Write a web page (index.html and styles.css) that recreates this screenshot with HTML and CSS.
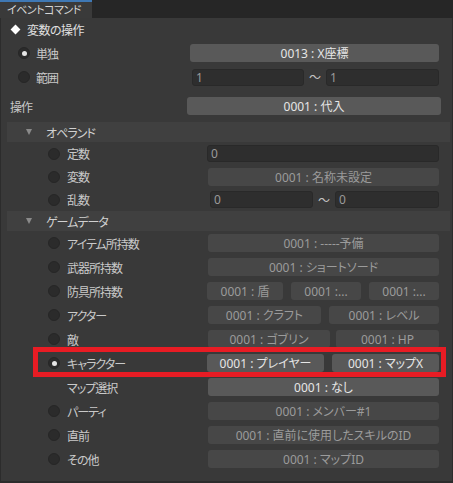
FILE: index.html
```html
<!DOCTYPE html>
<html lang="ja">
<head>
<meta charset="utf-8">
<title>イベントコマンド</title>
<link rel="stylesheet" href="styles.css">
</head>
<body>
<div class="tabbar"><div class="tab">イベントコマンド</div></div>
<div class="panel">
  <div class="title"><span class="diamond"></span><span>変数の操作</span></div>

  <div class="row top">
    <span class="radio on"></span><span class="label">単独</span>
    <div class="ctrl w-single"><div class="btn grow">0013 : X座標</div></div>
  </div>
  <div class="row top">
    <span class="radio"></span><span class="label">範囲</span>
    <div class="ctrl w-range">
      <div class="input w112">1</div><span class="tilde">〜</span><div class="input w113">1</div>
    </div>
  </div>
  <div class="spacer5"></div>
  <div class="row op">
    <span class="label">操作</span>
    <div class="ctrl w-op"><div class="btn grow">0001 : 代入</div></div>
  </div>

  <div class="band"><span class="tri"></span><span>オペランド</span></div>
  <div class="row sub h23">
    <span class="radio"></span><span class="label">定数</span>
    <div class="ctrl w232"><div class="input grow">0</div></div>
  </div>
  <div class="row sub h23">
    <span class="radio"></span><span class="label">変数</span>
    <div class="ctrl w231"><div class="btn dis grow">0001 : 名称未設定</div></div>
  </div>
  <div class="row sub h23">
    <span class="radio"></span><span class="label">乱数</span>
    <div class="ctrl w229">
      <div class="input w103">0</div><span class="tilde">〜</span><div class="input w104">0</div>
    </div>
  </div>

  <div class="band"><span class="tri"></span><span>ゲームデータ</span></div>
  <div class="row sub">
    <span class="radio"></span><span class="label">アイテム所持数</span>
    <div class="ctrl w231"><div class="btn dis grow">0001 : -----予備</div></div>
  </div>
  <div class="row sub">
    <span class="radio"></span><span class="label">武器所持数</span>
    <div class="ctrl w231"><div class="btn dis grow">0001 : ショートソード</div></div>
  </div>
  <div class="row sub">
    <span class="radio"></span><span class="label">防具所持数</span>
    <div class="ctrl w232 gap8">
      <div class="btn dis w76">0001 : 盾</div><div class="btn dis w70">0001 :...</div><div class="btn dis w70">0001 :...</div>
    </div>
  </div>
  <div class="row sub">
    <span class="radio"></span><span class="label">アクター</span>
    <div class="ctrl w231 gap8">
      <div class="btn dis w113">0001 : クラフト</div><div class="btn dis w110">0001 : レベル</div>
    </div>
  </div>
  <div class="row sub">
    <span class="radio"></span><span class="label">敵</span>
    <div class="ctrl w231 gap6">
      <div class="btn dis w122">0001 : ゴブリン</div><div class="btn dis w103">0001 : HP</div>
    </div>
  </div>
  <div class="row sub hl">
    <span class="radio on"></span><span class="label">キャラクター</span>
    <div class="ctrl w232 gap8">
      <div class="btn w117">0001 : プレイヤー</div><div class="btn w107">0001 : マップX</div>
    </div>
    <div class="hl-box"></div>
  </div>
  <div class="row noradio">
    <span class="label">マップ選択</span>
    <div class="ctrl w231"><div class="btn grow">0001 : なし</div></div>
  </div>
  <div class="row sub">
    <span class="radio"></span><span class="label">パーティ</span>
    <div class="ctrl w231"><div class="btn dis grow">0001 : メンバー#1</div></div>
  </div>
  <div class="row sub">
    <span class="radio"></span><span class="label">直前</span>
    <div class="ctrl w231"><div class="btn dis grow">0001 : 直前に使用したスキルのID</div></div>
  </div>
  <div class="row sub">
    <span class="radio"></span><span class="label">その他</span>
    <div class="ctrl w231"><div class="btn dis grow">0001 : マップID</div></div>
  </div>
</div>
</body>
</html>
```
FILE: styles.css
```css
* { box-sizing: border-box; }
html, body { margin: 0; padding: 0; }
body {
  width: 453px;
  height: 483px;
  overflow: hidden;
  background: #393939;
  font-family: "Noto Sans", "Noto Sans CJK JP", sans-serif;
  font-size: 12px;
  color: #c9c9c9;
  font-feature-settings: "palt" 1;
}
.tab, .title, .label, .band {
  font-family: "Noto Sans CJK JP", "Noto Sans", sans-serif;
  font-feature-settings: "palt" 1, "pkna" 1;
}
.tabbar { height: 18px; background: #262626; display: flex; }
.tab {
  width: 92px;
  background: #3a3a3a;
  border-top: 2px solid #3f78b4;
  color: #d6d6d6;
  padding-left: 7px;
  font-size: 11px;
  letter-spacing: -0.5px;
  line-height: 15px;
  white-space: nowrap;
}
.panel {
  height: 465px;
  box-shadow: inset 1px 0 #2c2c2c, inset -1px 0 #2c2c2c, inset 0 -2px #2c2c2c;
}
.title {
  height: 23px;
  display: flex;
  align-items: center;
  padding-left: 12px;
  gap: 8px;
  color: #e0e0e0;
  font-size: 12px;
  letter-spacing: -0.5px;
}
.diamond { width: 7px; height: 7px; background: #fff; transform: rotate(45deg); flex: none; }

.row { display: flex; align-items: center; height: 24px; padding-right: 14px; }
.row.h23 { height: 23px; }
.row.top { padding-left: 18px; }
.row.top .label { margin-left: 6px; }
.row.op { padding-left: 10px; }
.row.sub { padding-left: 48px; }
.row.sub .label { margin-left: 7px; }
.row.noradio { padding-left: 67px; }
.label { flex: none; white-space: nowrap; font-size: 12px; letter-spacing: -1px; }
.spacer5 { height: 5px; }

.radio {
  width: 12px; height: 12px; border-radius: 50%;
  background: #2b2b2b; border: 1px solid #262626;
  flex: none; display: flex; align-items: center; justify-content: center;
}
.radio.on::after { content: ""; width: 5px; height: 5px; border-radius: 50%; background: #e4e4e4; }

.ctrl { margin-left: auto; display: flex; align-items: center; }
.gap8 { gap: 8px; }
.gap6 { gap: 6px; }
.w-single { width: 249px; }
.w-range { width: 247px; }
.w-op { width: 254px; margin-right: -2px; }
.w232 { width: 232px; }
.w231 { width: 231px; }
.w229 { width: 229px; }
.grow { flex: 1; }
.w112 { width: 112px; } .w113 { width: 113px; }
.w103 { width: 103px; } .w104 { width: 104px; }
.w76 { width: 76px; } .w70 { width: 70px; }
.w110 { width: 110px; }
.w122 { width: 122px; }
.w117 { width: 117px; } .w107 { width: 107px; }

.btn {
  height: 18px; border-radius: 3px;
  background: #595959; color: #e6e6e6;
  display: flex; align-items: center; justify-content: center;
  white-space: nowrap; overflow: hidden; flex: none;
}
.btn.grow { flex: 1; }
.btn.dis { background: #474747; color: #9b9b9b; }
.input {
  height: 17px; border-radius: 3px;
  background: #2e2e2e; border: 1px solid #292929;
  color: #9a9a9a; padding-left: 3px;
  display: flex; align-items: center; flex: none;
}
.input.grow { flex: 1; }
.tilde { width: 22px; text-align: center; color: #c4c4c4; flex: none; }

.band {
  height: 20px; margin: 0 3px 0 7px;
  background: #404040;
  display: flex; align-items: center;
  padding-left: 19px; gap: 14px;
  color: #d0d0d0;
  font-size: 12px;
  letter-spacing: -1px;
}
.row.op + .band { margin-top: 4px; }
.tri {
  width: 0; height: 0;
  border-left: 3.5px solid transparent; border-right: 3.5px solid transparent;
  border-top: 6px solid #8a8a8a;
}
.hl { position: relative; }
.hl-box {
  position: absolute; left: 33px; top: -4px;
  width: 413px; height: 30px;
  border: 5px solid #e81c24;
  pointer-events: none;
}
```
